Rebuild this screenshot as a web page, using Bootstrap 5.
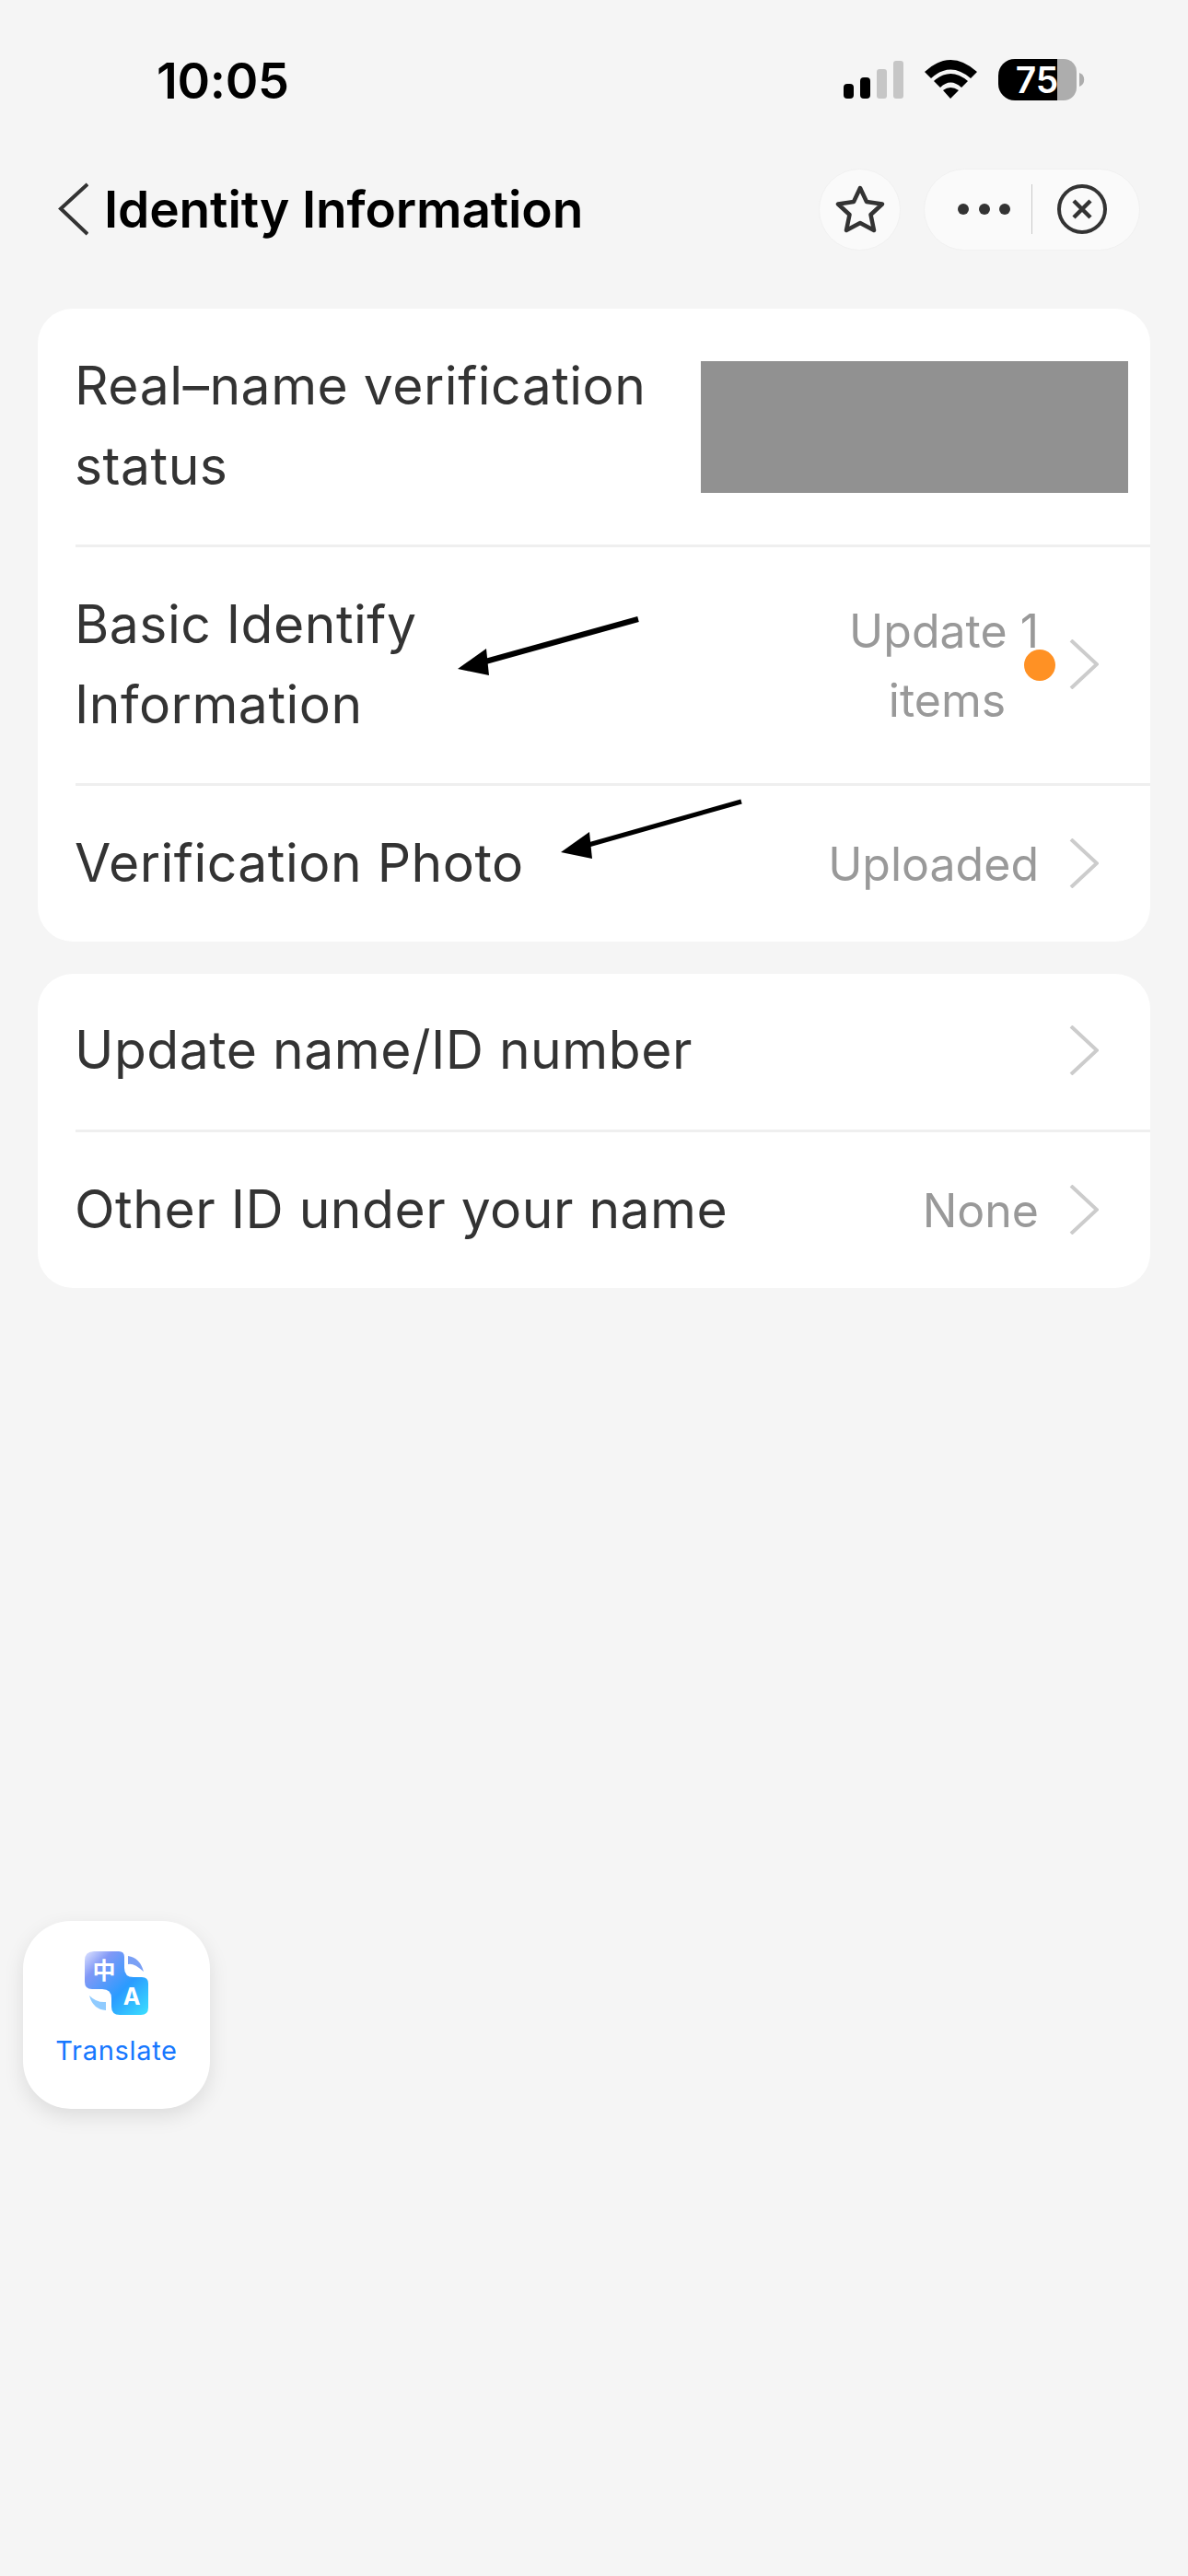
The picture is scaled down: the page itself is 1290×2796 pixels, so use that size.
<!DOCTYPE html>
<html lang="en">
<head>
<meta charset="utf-8">
<title>Identity Information</title>
<link href="https://cdn.jsdelivr.net/npm/bootstrap@5.3.0/dist/css/bootstrap.min.css" rel="stylesheet">
<style>
html,body{background:#f5f5f5;}
body{font-family:Inter,"Liberation Sans",sans-serif;color:#333;width:1290px;height:2796px;position:relative;overflow:hidden;}
.stat-bar{height:183px;padding:65px 0 0 170px;position:relative;}
.stat-time{font-size:54px;line-height:45px;font-weight:600;color:#000;letter-spacing:-.3px;}
.stat-icons{position:absolute;left:916px;top:64px;}
.top-bar{height:88px;padding:0 52px 0 63px;}
.title-txt{font-size:55px;line-height:88px;font-weight:600;color:#000;margin:0 0 0 17px;letter-spacing:-.15px;}
.round-btn{width:89px;height:89px;border-radius:50%;background:#fafafa;border:1px solid #f1f1f1;}
.capsule-btn{width:235px;height:89px;border-radius:45px;background:#fafafa;border:1px solid #f1f1f1;margin-left:25px;padding-left:36px;}
.cap-sep{width:1px;height:54px;background:#c9c9c9;margin:0 27px 0 22px;}
.stack{margin:64px 41px 0;gap:35px;}
.panel-box{background:#fff;border-radius:38px;overflow:hidden;}
.line-row{padding:40px 0 42px 41px;}
.line-row + .line-row{border-top:3px solid #efefef;margin-left:41px;padding-left:0;}
.row-tight{padding-top:39px;padding-bottom:43px;}
.row-label{font-size:57px;line-height:87px;color:#333;letter-spacing:.5px;margin-left:-1px;}
.row-value{font-size:50px;line-height:75px;color:#999;padding-top:4px;}
.items-shift{margin-left:7px;}
.chev-icon{width:32px;height:54px;margin:0 56px 0 33px;}
.chev-icon path{fill:none;stroke:#ccc;stroke-width:4;}
.grey-block{width:464px;height:143px;background:#919191;margin:1px 24px -1px 0;}
.dot-mark{width:34px;height:34px;border-radius:50%;background:#ff9124;position:absolute;right:103px;top:50%;margin-top:-16px;}
.arrow-layer{position:absolute;left:0;top:0;pointer-events:none;}
.float-card{position:absolute;left:25px;top:2085px;width:203px;height:204px;background:#fff;border-radius:52px;box-shadow:0 8px 22px rgba(0,0,0,.1);}
.float-lbl{font-size:29px;line-height:34px;color:#1677ff;letter-spacing:.7px;margin-top:21px;}
</style>
</head>
<body>
<div class="stat-bar d-flex align-items-start">
  <span class="stat-time">10:05</span>
  <svg class="stat-icons" width="262" height="64" viewBox="916 64 262 64" aria-hidden="true">
    <rect x="916" y="91" width="11" height="16" rx="4" fill="#000"/>
    <rect x="934" y="84" width="11" height="23" rx="4" fill="#000"/>
    <rect x="952" y="75" width="11" height="32" rx="3" fill="#c6c6c6"/>
    <rect x="970" y="66" width="11" height="41" rx="3" fill="#c6c6c6"/>
    <path d="M1004 78 Q1032 52 1061 78 L1054 85 Q1032 66 1011 85Z M1014 88 Q1032 72 1051 88 L1044 95 Q1032 84 1021 95Z M1024 98 Q1032 92 1041 98 L1032 107Z" fill="#000"/>
    <path d="M1102 64 H1148 V109 H1102 A18 18 0 0 1 1084 91 V82 A18 18 0 0 1 1102 64Z" fill="#000"/>
    <path d="M1148 64 H1155 A14 14 0 0 1 1169 78 V95 A14 14 0 0 1 1155 109 H1148Z" fill="#adadad"/>
    <path d="M1172 79 A8 8 0 0 1 1172 94Z" fill="#adadad"/>
    <text x="1126" y="101" text-anchor="middle" font-family="Inter,sans-serif" font-size="39" font-weight="600" fill="#fff">75</text>
  </svg>
</div>
<div class="top-bar d-flex align-items-center">
  <svg class="flex-shrink-0" width="33" height="58" viewBox="0 0 33 58" aria-hidden="true"><path d="M32 2 L3 28.5 L32 56" fill="none" stroke="#333" stroke-width="4"/></svg>
  <h1 class="title-txt flex-grow-1">Identity Information</h1>
  <div class="round-btn d-flex align-items-center justify-content-center flex-shrink-0">
    <svg width="54" height="52" viewBox="0 0 54 52" aria-hidden="true"><path d="M27 3 L34 18 L51 20.500 L38.500 32 L42 49 L27 41 L12 49 L15.500 32 L3 20.500 L20 18Z" fill="none" stroke="#333" stroke-width="4.500" stroke-linejoin="round"/></svg>
  </div>
  <div class="capsule-btn d-flex align-items-center flex-shrink-0">
    <svg width="58" height="14" viewBox="0 0 58 14" aria-hidden="true"><circle cx="6" cy="7" r="6" fill="#333"/><circle cx="29" cy="7" r="6" fill="#333"/><circle cx="51" cy="7" r="6" fill="#333"/></svg>
    <span class="cap-sep"></span>
    <svg width="54" height="54" viewBox="0 0 54 54" aria-hidden="true"><circle cx="27" cy="27" r="25" fill="none" stroke="#333" stroke-width="4"/><path d="M18 18 L36 36 M36 18 L18 36" stroke="#333" stroke-width="4.500"/></svg>
  </div>
</div>
<main class="stack d-flex flex-column">
  <section class="panel-box">
    <div class="line-row d-flex align-items-center justify-content-between">
      <div class="row-label">Real–name verification<br>status</div>
      <div class="grey-block"></div>
    </div>
    <div class="line-row d-flex align-items-center justify-content-between">
      <div class="row-label">Basic Identify<br>Information</div>
      <div class="d-flex align-items-center position-relative">
        <div class="row-value text-center">Update 1<br><span class="items-shift">items</span></div>
        <span class="dot-mark"></span>
        <svg class="chev-icon" viewBox="0 0 32 54" aria-hidden="true"><path d="M2 1 L30 27 L2 53"/></svg>
      </div>
    </div>
    <div class="line-row d-flex align-items-center justify-content-between">
      <div class="row-label">Verification Photo</div>
      <div class="d-flex align-items-center">
        <div class="row-value">Uploaded</div>
        <svg class="chev-icon" viewBox="0 0 32 54" aria-hidden="true"><path d="M2 1 L30 27 L2 53"/></svg>
      </div>
    </div>
  </section>
  <section class="panel-box">
    <div class="line-row row-tight d-flex align-items-center justify-content-between">
      <div class="row-label">Update name/ID number</div>
      <svg class="chev-icon" viewBox="0 0 32 54" aria-hidden="true"><path d="M2 1 L30 27 L2 53"/></svg>
    </div>
    <div class="line-row d-flex align-items-center justify-content-between">
      <div class="row-label">Other ID under your name</div>
      <div class="d-flex align-items-center">
        <div class="row-value">None</div>
        <svg class="chev-icon" viewBox="0 0 32 54" aria-hidden="true"><path d="M2 1 L30 27 L2 53"/></svg>
      </div>
    </div>
  </section>
</main>
<svg class="arrow-layer" width="1290" height="1100" viewBox="0 0 1290 1100" aria-hidden="true">
  <path d="M693 672 L520 720" stroke="#000" stroke-width="6"/>
  <path d="M497 726 L528 704 L531 733Z" fill="#000"/>
  <path d="M805 870 L632 919" stroke="#000" stroke-width="5"/>
  <path d="M609 925 L640 903 L643 932Z" fill="#000"/>
</svg>
<aside class="float-card d-flex flex-column align-items-center">
  <svg width="70" height="70" viewBox="0 0 70 70" style="margin-top:33px" aria-hidden="true">
    <defs>
      <linearGradient id="gr1" x1="0" y1="0" x2="1" y2="1"><stop offset="0" stop-color="#dfe4ff"/><stop offset=".22" stop-color="#8198f6"/><stop offset=".6" stop-color="#2a9bff"/><stop offset="1" stop-color="#3be0ff"/></linearGradient>
    </defs>
    <path d="M10 0 H37 Q43 0 43 6 V18 Q43 28 53 28 H62 Q69 28 69 35 V61 Q69 69 61 69 H38 Q29 69 29 60 V51 Q29 41 19 41 H8 Q0 41 0 33 V10 Q0 0 10 0Z" fill="url(#gr1)"/>
    <path d="M47 5 Q60 7 64 22 Q53 12 47 14Z" fill="#7aa0f5"/>
    <path d="M5 48 Q9 63 23 64 V55 Q13 56 5 48Z" fill="#8fcbff"/>
    <text x="21" y="30" text-anchor="middle" font-family="'Noto Sans CJK SC',sans-serif" font-size="25" font-weight="700" fill="#fff">中</text>
    <text x="51" y="58" text-anchor="middle" font-family="Inter,sans-serif" font-size="25" font-weight="700" fill="#fff">A</text>
  </svg>
  <div class="float-lbl">Translate</div>
</aside>
<script src="https://cdn.jsdelivr.net/npm/bootstrap@5.3.0/dist/js/bootstrap.bundle.min.js"></script>
</body>
</html>
